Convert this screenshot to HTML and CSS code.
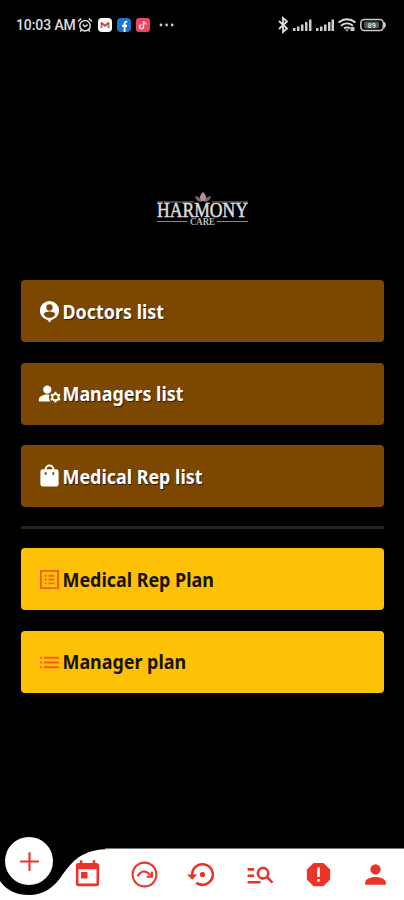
FILE: index.html
```html
<!DOCTYPE html>
<html lang="en">
<head>
<meta charset="utf-8">
<title>Harmony Care</title>
<link rel="stylesheet" href="styles.css">
</head>
<body>
<div class="screen">
  <header class="status">
    <span class="time">10:03 AM</span>
    <svg class="alarm" viewBox="0 0 16 16"><g fill="none" stroke="#ddd" stroke-width="1.5"><circle cx="8" cy="8.7" r="5.2"/><path d="M1 4.5 4.2 1.6M15 4.5l-3.2-2.9M5.7 7.7 8 9.6l2.7-2M4.5 13l-1.3 1.6M11.5 13l1.3 1.6"/></g></svg>
    <svg class="app" viewBox="0 0 14 14"><rect width="14" height="14" rx="4" fill="#fff"/><path d="M3.5 10V5" stroke="#4285f4" stroke-width="1.8"/><path d="M10.5 10V5" stroke="#34a853" stroke-width="1.8"/><path d="m3 4.5 4 3.3 4-3.3" fill="none" stroke="#e53930" stroke-width="1.8"/></svg>
    <svg class="app" viewBox="0 0 14 14"><rect width="14" height="14" rx="4" fill="#1976d2"/><path d="M7.6 14V5.5Q7.6 3.4 10.3 3.6M5 7.7h5" fill="none" stroke="#fff" stroke-width="1.9"/></svg>
    <svg class="app" viewBox="0 0 14 14"><rect width="14" height="14" rx="3" fill="#ee4560"/><path d="M7.5 3v5.8a2 2 0 1 1-2-2M7.5 3q.5 2.5 3 2.7" fill="none" stroke="#ffd5dc" stroke-width="1.5"/></svg>
    <svg class="dots" viewBox="0 0 16 4" fill="#ccc"><circle cx="2" cy="2" r="1.4"/><circle cx="7.6" cy="2" r="1.4"/><circle cx="13.2" cy="2" r="1.4"/></svg>
    <svg class="system" viewBox="0 0 110 18">
      <path d="m1 5 8 7.500-4 3.500V2l4 3.500L1 13" fill="none" stroke="#ddd" stroke-width="1.800"/>
      <g fill="#ccc"><path d="M15 12h2.500v3H15zM19 10.500h2.500v4.500H19zM23 8.500h2.500V15H23zM27 6h2.500v9H27zM31 3.500h2.500V15H31z"/><path d="M38 12h2.500v3H38zM42 10.500h2.500v4.500H42zM46 8.500h2.500V15H46zM50 6h2.500v9H50zM53.500 3.500H56V15h-2.500z"/></g>
      <g fill="none" stroke="#ddd" stroke-width="1.800"><path d="M60.500 6.500q8.500-6.500 17 0M63 9.700q6-4.500 12 0M66 12.500q3-2.200 6 0"/></g><path d="m67 13.500 2 2 2-2zM72.500 11h4v4h-4z" fill="#ccc"/>
      <rect x="82.800" y="3.500" width="22.500" height="11" rx="3.500" fill="none" stroke="#ccc" stroke-width="1.500"/><path d="M106 5.500q4 3.500 0 7z" fill="#ccc"/><rect x="86" y="5.500" width="15" height="7" rx="2" fill="#555"/><text x="89.500" y="12.200" class="battery">89</text>
    </svg>
  </header>

  <div class="brand">
    <svg viewBox="0 0 96 36">
      <g fill="#a7929c"><path d="M48 1q4 3 3 9h-6q-1-6 3-9z"/><path d="M40 5q5 0 7 6-6 0-7-6zM56 5q-5 0-7 6 6 0 7-6z" fill="#73656d"/></g>
      <path d="M47 3.500h2V10h-2z" fill="#cf7e96"/>
      <path d="M2 11h37M57 11h36M2 30.500h30M62 30.500h31" stroke="#aaa" stroke-width=".8"/>
      <text x="2" y="25.800" textLength="91" lengthAdjust="spacingAndGlyphs" class="brand-name">HARMONY</text>
      <text x="35" y="34" textLength="25" lengthAdjust="spacingAndGlyphs" class="brand-sub">CARE</text>
    </svg>
  </div>

  <main class="menu">
    <a class="card brown"><svg viewBox="0 0 24 24"><path d="M12 1a10 10 0 0 0-10 10c0 5 3.500 8.700 7.600 9.700L12 23.500l2.400-2.800C18.500 19.700 22 16 22 11A10 10 0 0 0 12 1zm0 3.500a3.300 3.300 0 1 1 0 6.600 3.300 3.300 0 0 1 0-6.600zm0 14a7 7 0 0 1-6-3.500c0-2 4-3 6-3s6 1 6 3a7 7 0 0 1-6 3.500z"/></svg><span>Doctors list</span></a>
    <a class="card brown"><svg viewBox="-1 0 26 26"><circle cx="9.500" cy="7.500" r="4.700"/><path d="M12 13.300Q10.800 13 9.500 13C5.500 13 0 15 0 18.500V21h13q-2.500-3.500-1-7.700z"/><circle cx="18.700" cy="16" r="3.600" fill="none" stroke="#fff" stroke-width="2.300"/><path d="M18.700 10v2M18.700 20v2M13.500 13l1.700 1M22.200 18l1.700 1M13.500 19l1.700-1M22.200 14l1.700-1" stroke="#fff" stroke-width="2.200"/></svg><span>Managers list</span></a>
    <a class="card brown"><svg viewBox="0 0 24 24"><path d="M19 4.500h-2a5 5 0 0 0-10 0H5A2.500 2.500 0 0 0 2.500 7v13A2.500 2.500 0 0 0 5 22.500h14a2.500 2.500 0 0 0 2.500-2.500V7A2.500 2.500 0 0 0 19 4.500zM12 1.500a3 3 0 0 1 3 3H9a3 3 0 0 1 3-3zM9 9.500a1 1 0 0 1-2 0v-2h2zm8 0a1 1 0 0 1-2 0v-2h2z"/></svg><span>Medical Rep list</span></a>
    <hr>
    <a class="card yellow"><svg viewBox="0 0 24 24"><path d="M2 2v20h20V2zm18 18H4V4h16zM11 7h6v2h-6zm0 4h6v2h-6zm0 4h6v2h-6zM7 7h2v2H7zm0 4h2v2H7zm0 4h2v2H7z"/></svg><span>Medical Rep Plan</span></a>
    <a class="card yellow"><svg viewBox="0 0 24 24"><path d="M2 6h2v2H2zm0 5h2v2H2zm0 5h2v2H2zM6 6h16v2H6zm0 5h16v2H6zm0 5h16v2H6z"/></svg><span>Manager plan</span></a>
  </main>

  <nav class="nav">
    <svg class="nav-shape" viewBox="0 0 404 64"><path d="M0 45C7 55 17 59 29 59 43 59 53 52 61 41 72 25 82 13 110 13H404V64H0Z" fill="#fff"/><path d="M105 12.500H404" stroke="#777"/></svg>
    <button class="add"><svg viewBox="0 0 24 24"><path d="M12 3v18M3 12h18" stroke="#eb3327" stroke-width="2"/></svg></button>
    <div class="tabs">
      <svg viewBox="0 0 24 24"><path d="M19 3h-1V1h-2v2H8V1H6v2H5a2 2 0 0 0-2 2v14a2 2 0 0 0 2 2h14a2 2 0 0 0 2-2V5a2 2 0 0 0-2-2zm0 16H5V8h14zM7 10h5v5H7z"/></svg>
      <svg viewBox="0 0 24 24"><circle cx="12" cy="12" r="9.200" fill="none" stroke="#eb3327" stroke-width="1.600"/><path d="M6.500 13.200Q11.300 6.500 16.500 12.500M17.700 9.800v4h-4" fill="none" stroke="#eb3327" stroke-width="1.600"/></svg>
      <svg viewBox="0 0 24 24"><path d="M14 12a2 2 0 1 0-4 0 2 2 0 0 0 4 0zM12 3a9 9 0 0 0-9 9H0l4 4 4-4H5a7 7 0 1 1 2.940 5.700l-1.420 1.440A9 9 0 1 0 12 3z"/></svg>
      <svg viewBox="0 0 24 24"><path d="M7 9H2V7h5zm0 3H2v2h5zm13.590 7-3.830-3.830A5 5 0 1 1 19 11c0 1.020-.31 1.960-.83 2.750L22 17.590zM17 11a3 3 0 1 0-6 0 3 3 0 0 0 6 0zM2 19h10v-2H2z"/></svg>
      <svg viewBox="0 0 24 24"><path d="M8.200 3h7.600L21 8.200v7.600L15.800 21H8.200L3 15.800V8.200z"/><path d="M11 6.500h2V14h-2zm0 9h2v2h-2z" fill="#fff"/></svg>
      <svg viewBox="0 0 24 24"><path d="M12 12a4 4 0 1 0 0-8 4 4 0 0 0 0 8zm0 2c-2.670 0-8 1.340-8 4v2h16v-2c0-2.660-5.330-4-8-4z"/></svg>
    </div>
  </nav>
</div>
</body>
</html>
```
FILE: styles.css
```css
* { box-sizing: border-box; }
body { margin: 0; background: #000; font-family: "Noto Sans", sans-serif; }
svg { display: block; flex: none; overflow: visible; }
.screen { width: 404px; height: 900px; display: flex; flex-direction: column; background: #000; overflow: hidden; }
.status { height: 50px; padding: 0 16px; display: flex; align-items: center; }
.time { width: 61px; font: 500 14px/18px Roboto, sans-serif; color: #ddd; white-space: nowrap; letter-spacing: -.1px; }
.alarm { width: 16px; height: 16px; margin-right: 5px; }
.app { width: 14px; height: 14px; margin-right: 5px; }
.dots { width: 16px; height: 4px; margin-left: 4px; }
.system { width: 110px; height: 18px; margin-left: auto; }
.battery { font: 700 7.500px Roboto, sans-serif; fill: #ddd; }
.brand { height: 230px; padding: 141px 0 0 155px; }
.brand svg { width: 96px; height: 36px; }
.brand-name { font: 400 20px "Liberation Serif", serif; fill: #ddd; stroke: #ddd; stroke-width: .5px; }
.brand-sub { font: 700 9.500px "Liberation Serif", serif; fill: #bbb; }
.menu { padding: 0 20px 0 21px; display: flex; flex-direction: column; gap: 20.300px; }
.card { height: 62.300px; padding: 1px 0 0 17px; border-radius: 4px; display: flex; align-items: center; font-size: 19.500px; font-weight: 700; line-height: 28px; }
.card svg { width: 23px; height: 23px; margin-right: 1.500px; fill: currentColor; }
.card span { transform: translate(-.5px, -.5px) scaleX(.918); transform-origin: left; white-space: nowrap; }
.brown { background: #7c4700; color: #fff; }
.brown span { text-shadow: 1px 1px 1px #2b1a10; }
.yellow { background: #ffc108; color: #16130a; }
.yellow svg { fill: #f2601c; }
hr { width: 100%; height: 3px; margin: -1.800px 0 -1.200px; border: 0; background: #242424; }
.nav { position: relative; height: 64px; margin-top: auto; flex: none; }
.nav-shape { position: absolute; inset: 0; width: 404px; height: 64px; }
.add { position: absolute; left: 5px; top: 1px; width: 48px; height: 48px; padding: 0; border: 0; border-radius: 50%; background: #fff; display: grid; place-items: center; }
.add svg { width: 25px; height: 25px; }
.tabs { position: relative; display: flex; justify-content: space-between; padding: 23px 12.500px 0 71.500px; }
.tabs svg { width: 31px; height: 31px; fill: #eb3327; }
```
